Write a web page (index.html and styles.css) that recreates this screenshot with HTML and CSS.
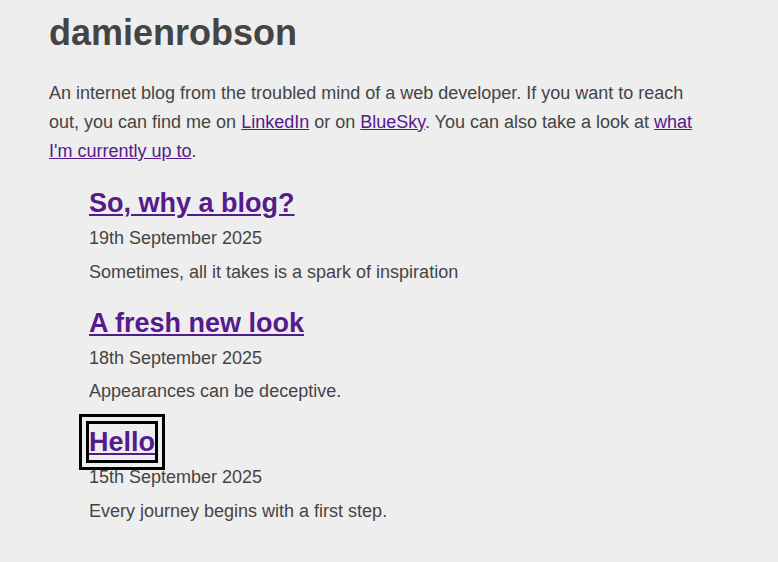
FILE: index.html
```html
<!DOCTYPE html>
<html lang="en">
<head>
<meta charset="utf-8">
<title>damienrobson</title>
<link rel="stylesheet" href="styles.css">
</head>
<body>
<main class="page">
  <h1 class="site-title">damienrobson</h1>
  <p class="intro">An internet blog from the troubled mind of a web developer. If you want to reach out, you can find me on <a href="#">LinkedIn</a> or on <a href="#">BlueSky</a>. You can also take a look at <a href="#">what I'm currently up to</a>.</p>
  <ul class="posts">
    <li class="post">
      <h2 class="post-title"><a href="#">So, why a blog?</a></h2>
      <div class="post-date">19th September 2025</div>
      <p class="post-summary">Sometimes, all it takes is a spark of inspiration</p>
    </li>
    <li class="post">
      <h2 class="post-title"><a href="#">A fresh new look</a></h2>
      <div class="post-date">18th September 2025</div>
      <p class="post-summary">Appearances can be deceptive.</p>
    </li>
    <li class="post">
      <h2 class="post-title"><a href="#" class="focused">Hello</a></h2>
      <div class="post-date">15th September 2025</div>
      <p class="post-summary">Every journey begins with a first step.</p>
    </li>
  </ul>
</main>
</body>
</html>
```
FILE: styles.css
```css
html, body {
  margin: 0;
  padding: 0;
  background: #eeeeee;
}
body {
  font-family: "Liberation Sans", Arial, sans-serif;
  font-size: 18px;
  color: #444444;
}
.page {
  max-width: 655px;
  padding: 0 49px;
}
a {
  color: #551a8b;
}
.site-title {
  font-size: 36px;
  line-height: 1.2;
  font-weight: bold;
  margin: 11px 0 0;
}
.intro {
  line-height: 1.6;
  margin: 25px 0 19.4px;
}
.posts {
  list-style: none;
  margin: 0;
  padding: 0 0 0 40px;
}
.post {
  margin-bottom: 18px;
}
.post-title {
  font-size: 27px;
  line-height: 36px;
  margin: 0;
  font-weight: bold;
}
.post-title a {
  display: inline-block;
}
.post-date {
  line-height: 1.6;
  padding-top: 3px;
}
.post-summary {
  line-height: 1.6;
  margin: 5px 0 0;
}
.focused {
  outline: 10px double #000;
}
```
